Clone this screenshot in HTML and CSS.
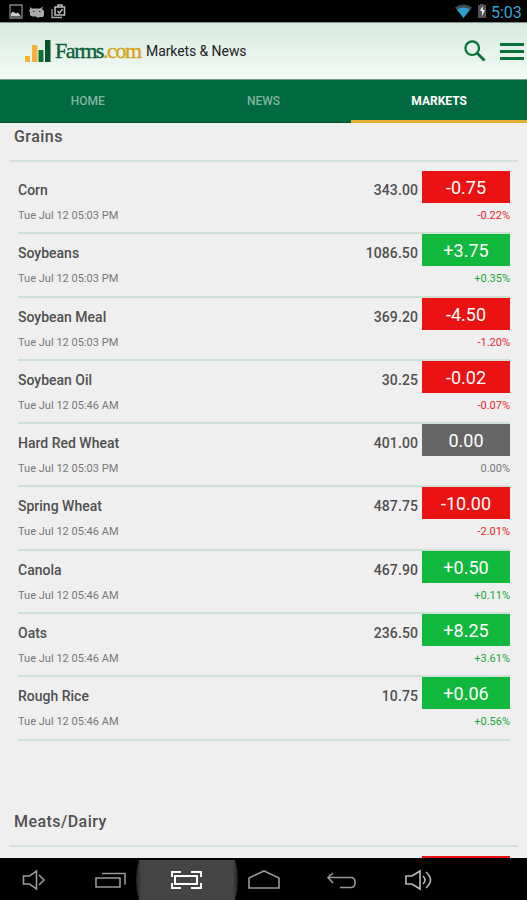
FILE: index.html
```html
<!DOCTYPE html>
<html lang="en">
<head>
    <meta charset="UTF-8">
    <meta name="viewport" content="width=device-width, initial-scale=1.0">
    <title>Farms.com Markets & News</title>
    <link rel="stylesheet" href="styles.css">
</head>
<body>
<div class="screen">

    <!-- Status bar -->
    <div class="statusbar">
        <svg class="notifications" width="60" height="22" viewBox="0 0 60 22">
            <path d="M2 5h12v13H2z" fill="none" stroke="#888" stroke-width="1.3"/>
            <path d="M3 16.500v-3l2-2 3 2 2-1 3 4z" fill="#ccc"/>
            <path d="M22 7l2 1.500h8l3-2-1 2.500 2 2v4l-1 2h-3l-1 .500h-2l-1-1h-4l-2-1.500v-3l-1-1 1-2z" fill="#aaa"/>
            <path d="M25 11.500h1.500M31 11.500h1.500" stroke="#333"/>
            <path d="M44 9v8.500h10" fill="none" stroke="#aaa" stroke-width="1.3"/>
            <path d="M47 7h9.500v8H47zM50 7V5h4v2" fill="none" stroke="#bbb" stroke-width="1.600"/>
            <path d="M49.500 11l2 2 3-4" fill="none" stroke="#bbb" stroke-width="1.500"/>
        </svg>
        <div class="system">
            <svg width="32" height="22" viewBox="0 0 32 22">
                <path d="M0 7.500Q8.500 1.500 17 7.500L8.500 18z" fill="#3d4a50"/>
                <path d="M2 9.500Q8.500 5.500 15 9.500L8.500 18z" fill="#2f9fcb"/>
                <path d="M23 5h2V4h4v1h2v13h-8z" fill="#555"/>
                <path d="M27.500 6l-2.500 5h2v5l3-6h-2z" fill="#eee"/>
            </svg>
            <span class="clock">5:03</span>
        </div>
    </div>

    <!-- App header -->
    <header class="header">
        <svg class="logo" width="26" height="34" viewBox="0 0 26 34">
            <rect x="0" y="22" width="5" height="6" fill="#f5b335"/>
            <rect x="7" y="11" width="5.500" height="17" fill="#f5b335"/>
            <rect x="13.500" y="16" width="5" height="12" fill="#08713a"/>
            <rect x="20" y="6" width="5.500" height="22" fill="#08552c"/>
        </svg>
        <div class="logo-text">Farms<span>.com</span></div>
        <span class="app-name">Markets &amp; News</span>
        <svg class="search" width="22" height="22" viewBox="0 0 22 22">
            <circle cx="8.200" cy="8.200" r="6.800" fill="none" stroke="#087039" stroke-width="2.200"/>
            <path d="M13 13l7.500 7.500" stroke="#087039" stroke-width="2.800"/>
        </svg>
        <div class="menu">
            <i></i>
            <i></i>
            <i></i>
        </div>
    </header>

    <nav class="tabs">
        <a class="tab">HOME</a>
        <a class="tab">NEWS</a>
        <a class="tab active">MARKETS</a>
    </nav>

    <main class="content">
        <h2 class="section-title">Grains</h2>
        <ul class="quotes">
            <li class="quote">
                <div class="info"><b>Corn</b><small>Tue Jul 12 05:03 PM</small></div>
                <span class="price">343.00</span>
                <div class="move down"><span class="change">-0.75</span><small>-0.22%</small></div>
            </li>
            <li class="quote">
                <div class="info"><b>Soybeans</b><small>Tue Jul 12 05:03 PM</small></div>
                <span class="price">1086.50</span>
                <div class="move up"><span class="change">+3.75</span><small>+0.35%</small></div>
            </li>
            <li class="quote">
                <div class="info"><b>Soybean Meal</b><small>Tue Jul 12 05:03 PM</small></div>
                <span class="price">369.20</span>
                <div class="move down"><span class="change">-4.50</span><small>-1.20%</small></div>
            </li>
            <li class="quote">
                <div class="info"><b>Soybean Oil</b><small>Tue Jul 12 05:46 AM</small></div>
                <span class="price">30.25</span>
                <div class="move down"><span class="change">-0.02</span><small>-0.07%</small></div>
            </li>
            <li class="quote">
                <div class="info"><b>Hard Red Wheat</b><small>Tue Jul 12 05:03 PM</small></div>
                <span class="price">401.00</span>
                <div class="move flat"><span class="change">0.00</span><small>0.00%</small></div>
            </li>
            <li class="quote">
                <div class="info"><b>Spring Wheat</b><small>Tue Jul 12 05:46 AM</small></div>
                <span class="price">487.75</span>
                <div class="move down"><span class="change">-10.00</span><small>-2.01%</small></div>
            </li>
            <li class="quote">
                <div class="info"><b>Canola</b><small>Tue Jul 12 05:46 AM</small></div>
                <span class="price">467.90</span>
                <div class="move up"><span class="change">+0.50</span><small>+0.11%</small></div>
            </li>
            <li class="quote">
                <div class="info"><b>Oats</b><small>Tue Jul 12 05:46 AM</small></div>
                <span class="price">236.50</span>
                <div class="move up"><span class="change">+8.25</span><small>+3.61%</small></div>
            </li>
            <li class="quote">
                <div class="info"><b>Rough Rice</b><small>Tue Jul 12 05:46 AM</small></div>
                <span class="price">10.75</span>
                <div class="move up"><span class="change">+0.06</span><small>+0.56%</small></div>
            </li>
        </ul>

        <h2 class="section-title">Meats/Dairy</h2>
        <ul class="quotes">
            <li class="quote">
                <div class="info"></div>
                <div class="move down"><span class="change"></span></div>
            </li>
        </ul>
    </main>

    <!-- Android navigation bar -->
    <footer class="navbar">
        <svg width="527" height="42" viewBox="0 0 527 42" fill="none" stroke="#999" stroke-width="1.600">
            <defs>
                <linearGradient id="glow">
                    <stop offset="0" stop-color="#222"/>
                    <stop offset=".05" stop-color="#444"/>
                    <stop offset=".95" stop-color="#444"/>
                    <stop offset="1" stop-color="#222"/>
                </linearGradient>
            </defs>
            <path d="M139 2Q133 22 139 42H235Q241 22 235 2z" fill="url(#glow)" stroke="none"/>
            <!-- volume down -->
            <path d="M23.500 18v8h6l7 5V13l-7 5z"/>
            <path d="M39 17l5 5-5 5"/>
            <!-- recent apps -->
            <path d="M96 20h24v9H96zM102 15.500h23v11"/>
            <!-- screenshot -->
            <g stroke="#fff" stroke-width="2">
                <path d="M175 18h22v8h-22z"/>
                <path d="M172 19v-5h9M191 14h10v5M201 25v5h-10M181 30h-9v-5"/>
            </g>
            <!-- home -->
            <path d="M249 30V20l15-7 15 7v10z"/>
            <!-- back -->
            <path d="M333 15l-5 4.500 5 5.500M329 19.500h22q4 0 4 5t-4 5h-11"/>
            <!-- volume up -->
            <g stroke="#bbb">
                <path d="M406 18v8h6l8 5V13l-8 5z"/>
                <path d="M423 18q4 4 0 8M426 14q9 8 0 16"/>
            </g>
        </svg>
    </footer>

</div>
</body>
</html>
```

FILE: styles.css
```css
* {
    box-sizing: border-box;
}

body {
    margin: 0;
    background-color: #efefef;
    font-family: Roboto, sans-serif;
    color: #505050;
}

.screen {
    display: flex;
    flex-direction: column;
    height: 900px;
    overflow: hidden;
}

/* Status bar */
.statusbar {
    display: flex;
    flex: none;
    justify-content: space-between;
    height: 22px;
    padding: 0 4px 0 8px;
    background-color: #000;
}

.system {
    display: flex;
    gap: 4px;
}

.clock {
    width: 32px;
    color: #35a5d3;
    font-size: 16px;
    line-height: 25px;
    white-space: nowrap;
}

/* Header */
.header {
    display: flex;
    flex: none;
    align-items: center;
    height: 58px;
    padding: 0 3px 0 25px;
    border-top: 1px solid #809087;
    border-bottom: 1px solid #6f9b87;
    background: linear-gradient(#d8eadf, #f4faf6);
}

.logo-text {
    width: 90px;
    margin-left: 4px;
    color: #0b6238;
    font-family: "Liberation Serif", serif;
    font-size: 22px;
    letter-spacing: -1.4px;
    -webkit-text-stroke: 0.4px;
    white-space: nowrap;
}

.logo-text span {
    color: #d6a419;
}

.app-name {
    margin-left: 1px;
    color: #222;
    font-size: 14px;
    letter-spacing: -0.08px;
}

.search {
    margin-left: auto;
}

.menu {
    display: flex;
    flex-direction: column;
    gap: 4px;
    width: 24px;
    margin-left: 14px;
}

.menu i {
    height: 3px;
    background-color: #087039;
}

/* Tabs */
.tabs {
    display: grid;
    flex: none;
    grid-template-columns: repeat(3, 1fr);
    height: 43px;
    background-color: #00693f;
}

.tab {
    height: 43px;
    border-bottom: 1px solid #005a20;
    color: #80b49f;
    font-size: 12px;
    font-weight: 500;
    line-height: 43px;
    text-align: center;
}

.tab.active {
    border-bottom: 3px solid #e8b030;
    color: #fff;
    font-weight: 700;
}

/* Quotes */
.content {
    flex: 1;
    min-height: 0;
    overflow: hidden;
}

.section-title {
    height: 39px;
    margin: 0 9px;
    padding-left: 5px;
    border-bottom: 2px solid #d2e2da;
    font-size: 16px;
    font-weight: 500;
    letter-spacing: 0.45px;
    line-height: 27px;
}

.quotes {
    margin: 0 17px 0 18px;
    padding: 9px 0 67px;
    list-style: none;
}

.quote {
    display: flex;
    height: 63.3px;
    border-bottom: 2px solid #cfe0d7;
}

.quote small {
    display: block;
    font-size: 11px;
    line-height: 14px;
}

.info {
    flex: 1;
    padding-top: 10px;
}

.info b {
    display: block;
    height: 28px;
    font-size: 14px;
    font-weight: 500;
    line-height: 18px;
}

.info small {
    color: #777;
    letter-spacing: 0.02px;
}

.price {
    padding-top: 10px;
    font-size: 14px;
    font-weight: 500;
    letter-spacing: 0.1px;
    line-height: 18px;
}

.move {
    width: 88px;
    margin-left: 4px;
    text-align: right;
}

.change {
    display: block;
    height: 32px;
    margin-bottom: 6px;
    color: #fff;
    font-size: 18px;
    line-height: 34px;
    text-align: center;
}

.move small {
    letter-spacing: 0;
}

.down {
    color: #e8262b;
}

.down .change {
    background-color: #ea1212;
}

.up {
    color: #18a83c;
}

.up .change {
    background-color: #10b93e;
}

.flat {
    color: #777;
}

.flat .change {
    background-color: #666;
}

/* Navigation bar */
.navbar {
    flex: none;
    height: 42px;
    background-color: #000;
}
```
